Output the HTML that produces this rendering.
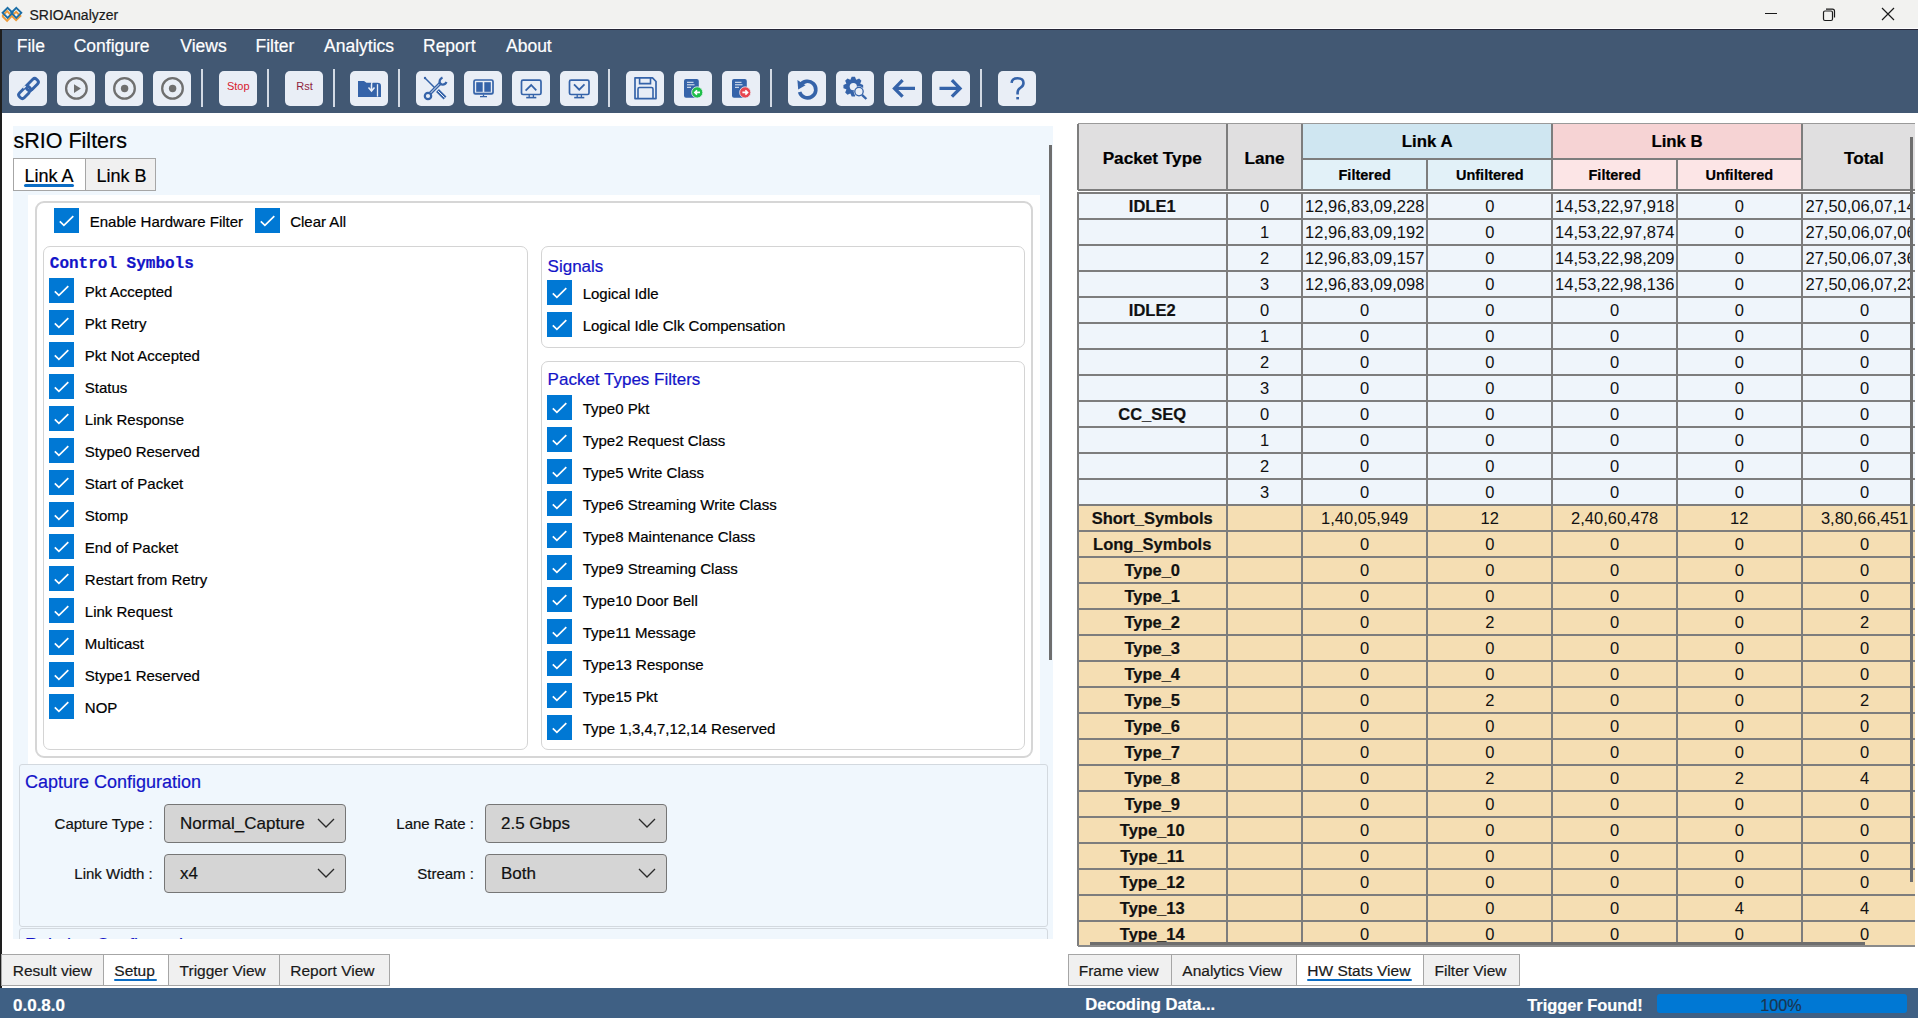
<!DOCTYPE html><html><head><meta charset="utf-8"><style>
html,body{margin:0;padding:0;width:1918px;height:1018px;overflow:hidden;background:#fff;position:relative;font-family:"Liberation Sans",sans-serif}
.t{position:absolute;line-height:1;white-space:pre;-webkit-text-stroke:0.2px currentColor}
.ns{-webkit-text-stroke:0}
.b{position:absolute;box-sizing:border-box}
.cb{position:absolute;width:25px;height:25px;background:#0078d4}
.cb svg{display:block}
.btn{position:absolute;top:71px;width:38px;height:35px;border-radius:5px;background:#e9eef6}
.btn svg{position:absolute;left:0;top:0}
.sep{position:absolute;top:69px;width:2px;height:38px;background:#d3dae4}
</style></head><body>
<div class="b" style="left:0.0px;top:0.0px;width:1918.0px;height:28.0px;background:#f2f2f0"></div>
<div class="b" style="left:0.0px;top:28.0px;width:1918.0px;height:1.0px;background:#fdfdfe"></div>
<svg style="position:absolute;left:0;top:0" width="26" height="28" viewBox="0 0 26 28">
<g fill="none" stroke-width="1.9" stroke-linejoin="miter">
<path d="M2.6 14.4 L7.4 9.6 L12 14.2 L16.4 18.6 L21.2 13.8" stroke="#ec9a3a" transform="translate(-0.3,1.6)"/>
<path d="M2.6 14.4 L7.4 19.2 L12 14.6 M12.8 13.8 L16.4 10.2 L21.2 15" stroke="#ec9a3a" transform="translate(-0.3,1.6)"/>
<path d="M7.6 7.8 L12.6 12.8 L7.6 17.8 L2.6 12.8 Z" stroke="#1b6ea6"/>
<path d="M16.3 7.8 L21.3 12.8 L16.3 17.8 L11.3 12.8 Z" stroke="#1b6ea6"/>
</g></svg>
<div class="t" style="left:29.5px;top:8.1px;font-size:14px;color:#1a1a1a;font-weight:400;font-family:'Liberation Sans', sans-serif;">SRIOAnalyzer</div>
<div class="b" style="left:1765.0px;top:13.0px;width:12.0px;height:1.0px;background:#1a1a1a"></div>
<svg style="position:absolute;left:1820px;top:6px" width="18" height="16" viewBox="0 0 18 16"><rect x="3.5" y="5" width="9" height="9.5" rx="1.5" fill="none" stroke="#1a1a1a" stroke-width="1.2"/><path d="M6 3.2 H12.5 Q14.5 3.2 14.5 5.2 V11.5" fill="none" stroke="#1a1a1a" stroke-width="1.2"/></svg>
<svg style="position:absolute;left:1880px;top:6px" width="16" height="16" viewBox="0 0 16 16"><path d="M2 2 L14 14 M14 2 L2 14" stroke="#1a1a1a" stroke-width="1.2"/></svg>
<div class="b" style="left:0.0px;top:29.0px;width:1918.0px;height:84.0px;background:#425873"></div>
<div class="b" style="left:0.0px;top:29.0px;width:1918.0px;height:1.0px;background:#262636"></div>
<div class="t" style="left:16.8px;top:38.4px;font-size:17.5px;color:#ffffff;font-weight:400;font-family:'Liberation Sans', sans-serif;">File</div>
<div class="t" style="left:73.7px;top:38.4px;font-size:17.5px;color:#ffffff;font-weight:400;font-family:'Liberation Sans', sans-serif;">Configure</div>
<div class="t" style="left:180.3px;top:38.4px;font-size:17.5px;color:#ffffff;font-weight:400;font-family:'Liberation Sans', sans-serif;">Views</div>
<div class="t" style="left:255.5px;top:38.4px;font-size:17.5px;color:#ffffff;font-weight:400;font-family:'Liberation Sans', sans-serif;">Filter</div>
<div class="t" style="left:324.0px;top:38.4px;font-size:17.5px;color:#ffffff;font-weight:400;font-family:'Liberation Sans', sans-serif;">Analytics</div>
<div class="t" style="left:423.0px;top:38.4px;font-size:17.5px;color:#ffffff;font-weight:400;font-family:'Liberation Sans', sans-serif;">Report</div>
<div class="t" style="left:506.0px;top:38.4px;font-size:17.5px;color:#ffffff;font-weight:400;font-family:'Liberation Sans', sans-serif;">About</div>
<div class="btn" style="left:9px"><svg width="38" height="35" viewBox="0 0 38 35"><g fill="none" stroke="#3563a9" stroke-width="2.9"><rect x="16.40" y="10.25" width="13.60" height="6.70" rx="2.6" transform="rotate(-45 23.2 13.6)"/><rect x="9.00" y="18.05" width="13.60" height="6.70" rx="2.6" transform="rotate(-45 15.8 21.4)"/></g><path d="M14.3 17.3 L16.6 15.0" stroke="#e9eef6" stroke-width="1.6"/><path d="M21.6 22.8 L23.9 20.5" stroke="#e9eef6" stroke-width="1.6"/></svg></div>
<div class="btn" style="left:57px"><svg width="38" height="35" viewBox="0 0 38 35"><circle cx="19.4" cy="17.4" r="10.3" fill="none" stroke="#6f6f6f" stroke-width="2.3"/><path d="M17 13.2 L23.9 17.6 L17 22 Z" fill="#6f6f6f"/></svg></div>
<div class="btn" style="left:105px"><svg width="38" height="35" viewBox="0 0 38 35"><circle cx="19.5" cy="17.4" r="10.3" fill="none" stroke="#6f6f6f" stroke-width="2.3"/><circle cx="19.6" cy="17.5" r="3.7" fill="#6f6f6f"/></svg></div>
<div class="btn" style="left:153px"><svg width="38" height="35" viewBox="0 0 38 35"><circle cx="19.5" cy="17.4" r="10.3" fill="none" stroke="#6f6f6f" stroke-width="2.3"/><circle cx="19.6" cy="17.5" r="3.7" fill="#6f6f6f"/></svg></div>
<div class="btn" style="left:219px"><svg width="38" height="35" viewBox="0 0 38 35"><text x="19.2" y="18.9" text-anchor="middle" font-family="Liberation Sans" font-size="11" fill="#d8202e">Stop</text></svg></div>
<div class="btn" style="left:285px"><svg width="38" height="35" viewBox="0 0 38 35"><text x="19.5" y="18.9" text-anchor="middle" font-family="Liberation Sans" font-size="11" fill="#8f1d3d">Rst</text></svg></div>
<div class="btn" style="left:350px"><svg width="38" height="35" viewBox="0 0 38 35"><path d="M8 10 H14 L16.5 11.8 H27.5 Q31 11.8 31 15 V26 H8 Z" fill="#3563a9"/><path d="M23.6 9 Q21.5 11 21.5 14 V19.5 M18.5 16.5 L21.5 20 L24.5 16.5" stroke="#e9eef6" stroke-width="1.5" fill="none"/><path d="M27.5 13.2 V25.6" stroke="#e9eef6" stroke-width="1.3" fill="none"/></svg></div>
<div class="btn" style="left:416px"><svg width="38" height="35" viewBox="0 0 38 35"><g fill="none" stroke="#3563a9"><path d="M9 7 L18.5 16.5" stroke-width="1.5"/><circle cx="9" cy="7" r="1.2" fill="#3563a9" stroke="none"/><path d="M21.5 19.5 L29 27" stroke-width="4"/><path d="M22 20 L28.6 26.6" stroke="#e9eef6" stroke-width="1"/><path d="M14 22.5 L25 11.5" stroke-width="3.4"/><path d="M14.3 22.2 L24.7 11.8" stroke="#e9eef6" stroke-width="1"/><circle cx="12" cy="25" r="3.2" stroke-width="2.2"/><path d="M24 13 Q22.5 8.5 26.5 6.5 M30.5 11 Q28.5 15 24 13" stroke-width="2.2"/></g></svg></div>
<div class="btn" style="left:464px"><svg width="38" height="35" viewBox="0 0 38 35"><rect x="10" y="9" width="19" height="14" rx="1.5" fill="none" stroke="#3563a9" stroke-width="1.7"/><path d="M10 22.3 H29" stroke="#3563a9" stroke-width="1.2"/><rect x="12.2" y="11.2" width="6.5" height="9.6" fill="#3563a9"/><rect x="20.3" y="11.2" width="6.5" height="9.6" fill="#3563a9"/><path d="M19.5 23.5 V25.5 M16 25.7 H23" stroke="#3563a9" stroke-width="1.3"/></svg></div>
<div class="btn" style="left:512px"><svg width="38" height="35" viewBox="0 0 38 35"><rect x="9.5" y="9.2" width="19.5" height="14.3" rx="1.5" fill="none" stroke="#3563a9" stroke-width="1.7"/><path d="M13.6 19.7 L19.2 14 L24.3 19.3" fill="none" stroke="#3563a9" stroke-width="1.8"/><path d="M17.2 23.6 V26 M21.4 23.6 V26" stroke="#3563a9" stroke-width="1.3"/><path d="M14.2 26.6 H24.3" stroke="#3563a9" stroke-width="1.6"/></svg></div>
<div class="btn" style="left:560px"><svg width="38" height="35" viewBox="0 0 38 35"><rect x="9.5" y="9.2" width="19.5" height="14.3" rx="1.5" fill="none" stroke="#3563a9" stroke-width="1.7"/><path d="M14 13.3 L19.2 18.7 L24.5 13.3" fill="none" stroke="#3563a9" stroke-width="1.8"/><path d="M17.2 23.6 V26 M21.4 23.6 V26" stroke="#3563a9" stroke-width="1.3"/><path d="M14.2 26.6 H24.3" stroke="#3563a9" stroke-width="1.6"/></svg></div>
<div class="btn" style="left:626px"><svg width="38" height="35" viewBox="0 0 38 35"><path d="M9 6.8 H26.5 L30 10.5 V27.6 H9 Z" fill="none" stroke="#3563a9" stroke-width="1.7" stroke-linejoin="round"/><path d="M13.6 6.8 V12.6 H24.5 V6.8" fill="none" stroke="#3563a9" stroke-width="1.6"/><path d="M12 27.6 V18 Q12 16.5 13.5 16.5 H25.5 Q27 16.5 27 18 V27.6" fill="none" stroke="#3563a9" stroke-width="1.6"/></svg></div>
<div class="btn" style="left:674px"><svg width="38" height="35" viewBox="0 0 38 35"><rect x="10" y="8" width="14.8" height="18.8" rx="2" fill="#3563a9"/><path d="M13 11.3 H19.5 M13 13.8 H20.5 M13 16.3 H17" stroke="#e9eef6" stroke-width="1"/><circle cx="23.2" cy="21.4" r="5.6" fill="#1fbf4a" stroke="#e9eef6" stroke-width="0.8"/><path d="M26 21.4 H20.8 M23 19.2 L20.8 21.4 L23 23.6" stroke="#fff" stroke-width="1.6" fill="none"/></svg></div>
<div class="btn" style="left:722px"><svg width="38" height="35" viewBox="0 0 38 35"><rect x="10" y="8" width="14.8" height="18.8" rx="2" fill="#3563a9"/><path d="M13 11.3 H19.5 M13 13.8 H20.5 M13 16.3 H17" stroke="#e9eef6" stroke-width="1"/><circle cx="23.2" cy="21.4" r="5.6" fill="#e8464f" stroke="#e9eef6" stroke-width="0.8"/><path d="M20.4 21.4 H25.6 M23.4 19.2 L25.6 21.4 L23.4 23.6" stroke="#fff" stroke-width="1.6" fill="none"/></svg></div>
<div class="btn" style="left:788px"><svg width="38" height="35" viewBox="0 0 38 35"><path d="M12.3 14.5 A8.3 8.3 0 1 1 11.6 21" fill="none" stroke="#3563a9" stroke-width="3.6"/><path d="M9.4 9 L10.2 18.5 L17.5 14.2 Z" fill="#3563a9"/></svg></div>
<div class="btn" style="left:836px"><svg width="38" height="35" viewBox="0 0 38 35"><path d="M24.38 12.83 L27.16 13.96 L27.16 17.24 L24.38 18.37 L24.26 18.65 L25.44 21.41 L23.11 23.74 L20.35 22.56 L20.07 22.68 L18.94 25.46 L15.66 25.46 L14.53 22.68 L14.25 22.56 L11.49 23.74 L9.16 21.41 L10.34 18.65 L10.22 18.37 L7.44 17.24 L7.44 13.96 L10.22 12.83 L10.34 12.55 L9.16 9.79 L11.49 7.46 L14.25 8.64 L14.53 8.52 L15.66 5.74 L18.94 5.74 L20.07 8.52 L20.35 8.64 L23.11 7.46 L25.44 9.79 L24.26 12.55 Z" fill="#3563a9"/><circle cx="17.3" cy="15.6" r="3.6" fill="#e9eef6"/><circle cx="23" cy="20.6" r="5.3" fill="#e9eef6"/><circle cx="23" cy="20.6" r="4.2" fill="none" stroke="#3563a9" stroke-width="1.3"/><path d="M26 23.8 L30.4 28" stroke="#3563a9" stroke-width="2.4"/></svg></div>
<div class="btn" style="left:884px"><svg width="38" height="35" viewBox="0 0 38 35"><path d="M31 17.4 H11 M18.6 9.2 L10.5 17.4 L18.6 25.6" fill="none" stroke="#3563a9" stroke-width="3.3"/></svg></div>
<div class="btn" style="left:932px"><svg width="38" height="35" viewBox="0 0 38 35"><path d="M7.5 17.4 H27.5 M19.9 9.2 L28 17.4 L19.9 25.6" fill="none" stroke="#3563a9" stroke-width="3.3"/></svg></div>
<div class="btn" style="left:998px"><svg width="38" height="35" viewBox="0 0 38 35"><path d="M13.6 11.8 Q14 7.3 19.6 7.3 Q25.5 7.3 25.5 12 Q25.5 15 22.2 17 Q19.6 18.7 19.6 21.3 V23.5" fill="none" stroke="#3563a9" stroke-width="2.6"/><rect x="18.3" y="26" width="2.7" height="2.4" fill="#3563a9"/></svg></div>
<div class="sep" style="left:201px"></div>
<div class="sep" style="left:267px"></div>
<div class="sep" style="left:333px"></div>
<div class="sep" style="left:398px"></div>
<div class="sep" style="left:608px"></div>
<div class="sep" style="left:770px"></div>
<div class="sep" style="left:980px"></div>
<div class="b" style="left:0.0px;top:29.0px;width:1.5px;height:959.0px;background:#1e1e1e"></div>
<div class="b" style="left:13.0px;top:126.0px;width:1040.0px;height:813.0px;background:#f0f7fd"></div>
<div class="t" style="left:13.5px;top:130.8px;font-size:21.5px;color:#000;font-weight:400;font-family:'Liberation Sans', sans-serif;">sRIO Filters</div>
<div class="b" style="left:13.0px;top:158.0px;width:72.5px;height:33.0px;background:#fff;border:1px solid #a6a6a6;border-right:none"></div>
<div class="b" style="left:85.0px;top:158.0px;width:71.0px;height:33.0px;background:#f0f0f0;border:1px solid #a6a6a6"></div>
<div class="t" style="left:24.4px;top:166.8px;font-size:18px;color:#000;font-weight:400;font-family:'Liberation Sans', sans-serif;">Link A</div>
<div class="b" style="left:24.0px;top:184.0px;width:50.0px;height:3.0px;background:#0a6cc4;border-radius:2px"></div>
<div class="t" style="left:96.5px;top:166.8px;font-size:18px;color:#000;font-weight:400;font-family:'Liberation Sans', sans-serif;">Link B</div>
<div class="b" style="left:27.5px;top:195.0px;width:1012.5px;height:569.0px;background:#fff"></div>
<div class="b" style="left:34.5px;top:201.3px;width:998.0px;height:556.7px;background:#fff;border:2px solid #d6d6d6;border-radius:9px"></div>
<div class="cb" style="left:54px;top:208px"><svg width="25" height="25" viewBox="0 0 25 25"><path d="M5.8 13.4 L9.9 17.4 L19.3 8.2" fill="none" stroke="#fff" stroke-width="1.7"/></svg></div>
<div class="t" style="left:89.7px;top:214.3px;font-size:15px;color:#000;font-weight:400;font-family:'Liberation Sans', sans-serif;">Enable Hardware Filter</div>
<div class="cb" style="left:255px;top:208px"><svg width="25" height="25" viewBox="0 0 25 25"><path d="M5.8 13.4 L9.9 17.4 L19.3 8.2" fill="none" stroke="#fff" stroke-width="1.7"/></svg></div>
<div class="t" style="left:290.2px;top:214.3px;font-size:15px;color:#000;font-weight:400;font-family:'Liberation Sans', sans-serif;">Clear All</div>
<div class="b" style="left:42.5px;top:246.0px;width:485.0px;height:504.3px;background:#fff;border:1.5px solid #d4d4d4;border-radius:7px"></div>
<div class="t" style="left:49.8px;top:256.4px;font-size:16px;color:#1414c8;font-weight:700;font-family:'Liberation Mono', monospace;">Control Symbols</div>
<div class="cb" style="left:49px;top:278px"><svg width="25" height="25" viewBox="0 0 25 25"><path d="M5.8 13.4 L9.9 17.4 L19.3 8.2" fill="none" stroke="#fff" stroke-width="1.7"/></svg></div>
<div class="t" style="left:84.8px;top:284.3px;font-size:15px;color:#000;font-weight:400;font-family:'Liberation Sans', sans-serif;">Pkt Accepted</div>
<div class="cb" style="left:49px;top:310px"><svg width="25" height="25" viewBox="0 0 25 25"><path d="M5.8 13.4 L9.9 17.4 L19.3 8.2" fill="none" stroke="#fff" stroke-width="1.7"/></svg></div>
<div class="t" style="left:84.8px;top:316.3px;font-size:15px;color:#000;font-weight:400;font-family:'Liberation Sans', sans-serif;">Pkt Retry</div>
<div class="cb" style="left:49px;top:342px"><svg width="25" height="25" viewBox="0 0 25 25"><path d="M5.8 13.4 L9.9 17.4 L19.3 8.2" fill="none" stroke="#fff" stroke-width="1.7"/></svg></div>
<div class="t" style="left:84.8px;top:348.3px;font-size:15px;color:#000;font-weight:400;font-family:'Liberation Sans', sans-serif;">Pkt Not Accepted</div>
<div class="cb" style="left:49px;top:374px"><svg width="25" height="25" viewBox="0 0 25 25"><path d="M5.8 13.4 L9.9 17.4 L19.3 8.2" fill="none" stroke="#fff" stroke-width="1.7"/></svg></div>
<div class="t" style="left:84.8px;top:380.3px;font-size:15px;color:#000;font-weight:400;font-family:'Liberation Sans', sans-serif;">Status</div>
<div class="cb" style="left:49px;top:406px"><svg width="25" height="25" viewBox="0 0 25 25"><path d="M5.8 13.4 L9.9 17.4 L19.3 8.2" fill="none" stroke="#fff" stroke-width="1.7"/></svg></div>
<div class="t" style="left:84.8px;top:412.3px;font-size:15px;color:#000;font-weight:400;font-family:'Liberation Sans', sans-serif;">Link Response</div>
<div class="cb" style="left:49px;top:438px"><svg width="25" height="25" viewBox="0 0 25 25"><path d="M5.8 13.4 L9.9 17.4 L19.3 8.2" fill="none" stroke="#fff" stroke-width="1.7"/></svg></div>
<div class="t" style="left:84.8px;top:444.3px;font-size:15px;color:#000;font-weight:400;font-family:'Liberation Sans', sans-serif;">Stype0 Reserved</div>
<div class="cb" style="left:49px;top:470px"><svg width="25" height="25" viewBox="0 0 25 25"><path d="M5.8 13.4 L9.9 17.4 L19.3 8.2" fill="none" stroke="#fff" stroke-width="1.7"/></svg></div>
<div class="t" style="left:84.8px;top:476.3px;font-size:15px;color:#000;font-weight:400;font-family:'Liberation Sans', sans-serif;">Start of Packet</div>
<div class="cb" style="left:49px;top:502px"><svg width="25" height="25" viewBox="0 0 25 25"><path d="M5.8 13.4 L9.9 17.4 L19.3 8.2" fill="none" stroke="#fff" stroke-width="1.7"/></svg></div>
<div class="t" style="left:84.8px;top:508.3px;font-size:15px;color:#000;font-weight:400;font-family:'Liberation Sans', sans-serif;">Stomp</div>
<div class="cb" style="left:49px;top:534px"><svg width="25" height="25" viewBox="0 0 25 25"><path d="M5.8 13.4 L9.9 17.4 L19.3 8.2" fill="none" stroke="#fff" stroke-width="1.7"/></svg></div>
<div class="t" style="left:84.8px;top:540.3px;font-size:15px;color:#000;font-weight:400;font-family:'Liberation Sans', sans-serif;">End of Packet</div>
<div class="cb" style="left:49px;top:566px"><svg width="25" height="25" viewBox="0 0 25 25"><path d="M5.8 13.4 L9.9 17.4 L19.3 8.2" fill="none" stroke="#fff" stroke-width="1.7"/></svg></div>
<div class="t" style="left:84.8px;top:572.3px;font-size:15px;color:#000;font-weight:400;font-family:'Liberation Sans', sans-serif;">Restart from Retry</div>
<div class="cb" style="left:49px;top:598px"><svg width="25" height="25" viewBox="0 0 25 25"><path d="M5.8 13.4 L9.9 17.4 L19.3 8.2" fill="none" stroke="#fff" stroke-width="1.7"/></svg></div>
<div class="t" style="left:84.8px;top:604.3px;font-size:15px;color:#000;font-weight:400;font-family:'Liberation Sans', sans-serif;">Link Request</div>
<div class="cb" style="left:49px;top:630px"><svg width="25" height="25" viewBox="0 0 25 25"><path d="M5.8 13.4 L9.9 17.4 L19.3 8.2" fill="none" stroke="#fff" stroke-width="1.7"/></svg></div>
<div class="t" style="left:84.8px;top:636.3px;font-size:15px;color:#000;font-weight:400;font-family:'Liberation Sans', sans-serif;">Multicast</div>
<div class="cb" style="left:49px;top:662px"><svg width="25" height="25" viewBox="0 0 25 25"><path d="M5.8 13.4 L9.9 17.4 L19.3 8.2" fill="none" stroke="#fff" stroke-width="1.7"/></svg></div>
<div class="t" style="left:84.8px;top:668.3px;font-size:15px;color:#000;font-weight:400;font-family:'Liberation Sans', sans-serif;">Stype1 Reserved</div>
<div class="cb" style="left:49px;top:694px"><svg width="25" height="25" viewBox="0 0 25 25"><path d="M5.8 13.4 L9.9 17.4 L19.3 8.2" fill="none" stroke="#fff" stroke-width="1.7"/></svg></div>
<div class="t" style="left:84.8px;top:700.3px;font-size:15px;color:#000;font-weight:400;font-family:'Liberation Sans', sans-serif;">NOP</div>
<div class="b" style="left:541.0px;top:246.0px;width:484.0px;height:101.5px;background:#fff;border:1.5px solid #d4d4d4;border-radius:7px"></div>
<div class="t" style="left:547.6px;top:257.9px;font-size:17px;color:#1414c8;font-weight:400;font-family:'Liberation Sans', sans-serif;">Signals</div>
<div class="cb" style="left:547px;top:280px"><svg width="25" height="25" viewBox="0 0 25 25"><path d="M5.8 13.4 L9.9 17.4 L19.3 8.2" fill="none" stroke="#fff" stroke-width="1.7"/></svg></div>
<div class="t" style="left:582.7px;top:286.3px;font-size:15px;color:#000;font-weight:400;font-family:'Liberation Sans', sans-serif;">Logical Idle</div>
<div class="cb" style="left:547px;top:312px"><svg width="25" height="25" viewBox="0 0 25 25"><path d="M5.8 13.4 L9.9 17.4 L19.3 8.2" fill="none" stroke="#fff" stroke-width="1.7"/></svg></div>
<div class="t" style="left:582.7px;top:318.3px;font-size:15px;color:#000;font-weight:400;font-family:'Liberation Sans', sans-serif;">Logical Idle Clk Compensation</div>
<div class="b" style="left:541.0px;top:360.5px;width:484.0px;height:389.8px;background:#fff;border:1.5px solid #d4d4d4;border-radius:7px"></div>
<div class="t" style="left:547.6px;top:371.4px;font-size:17px;color:#1414c8;font-weight:400;font-family:'Liberation Sans', sans-serif;">Packet Types Filters</div>
<div class="cb" style="left:547px;top:395px"><svg width="25" height="25" viewBox="0 0 25 25"><path d="M5.8 13.4 L9.9 17.4 L19.3 8.2" fill="none" stroke="#fff" stroke-width="1.7"/></svg></div>
<div class="t" style="left:582.7px;top:400.5px;font-size:15px;color:#000;font-weight:400;font-family:'Liberation Sans', sans-serif;">Type0 Pkt</div>
<div class="cb" style="left:547px;top:427px"><svg width="25" height="25" viewBox="0 0 25 25"><path d="M5.8 13.4 L9.9 17.4 L19.3 8.2" fill="none" stroke="#fff" stroke-width="1.7"/></svg></div>
<div class="t" style="left:582.7px;top:432.5px;font-size:15px;color:#000;font-weight:400;font-family:'Liberation Sans', sans-serif;">Type2 Request Class</div>
<div class="cb" style="left:547px;top:459px"><svg width="25" height="25" viewBox="0 0 25 25"><path d="M5.8 13.4 L9.9 17.4 L19.3 8.2" fill="none" stroke="#fff" stroke-width="1.7"/></svg></div>
<div class="t" style="left:582.7px;top:464.5px;font-size:15px;color:#000;font-weight:400;font-family:'Liberation Sans', sans-serif;">Type5 Write Class</div>
<div class="cb" style="left:547px;top:491px"><svg width="25" height="25" viewBox="0 0 25 25"><path d="M5.8 13.4 L9.9 17.4 L19.3 8.2" fill="none" stroke="#fff" stroke-width="1.7"/></svg></div>
<div class="t" style="left:582.7px;top:496.5px;font-size:15px;color:#000;font-weight:400;font-family:'Liberation Sans', sans-serif;">Type6 Streaming Write Class</div>
<div class="cb" style="left:547px;top:523px"><svg width="25" height="25" viewBox="0 0 25 25"><path d="M5.8 13.4 L9.9 17.4 L19.3 8.2" fill="none" stroke="#fff" stroke-width="1.7"/></svg></div>
<div class="t" style="left:582.7px;top:528.5px;font-size:15px;color:#000;font-weight:400;font-family:'Liberation Sans', sans-serif;">Type8 Maintenance Class</div>
<div class="cb" style="left:547px;top:555px"><svg width="25" height="25" viewBox="0 0 25 25"><path d="M5.8 13.4 L9.9 17.4 L19.3 8.2" fill="none" stroke="#fff" stroke-width="1.7"/></svg></div>
<div class="t" style="left:582.7px;top:560.5px;font-size:15px;color:#000;font-weight:400;font-family:'Liberation Sans', sans-serif;">Type9 Streaming Class</div>
<div class="cb" style="left:547px;top:587px"><svg width="25" height="25" viewBox="0 0 25 25"><path d="M5.8 13.4 L9.9 17.4 L19.3 8.2" fill="none" stroke="#fff" stroke-width="1.7"/></svg></div>
<div class="t" style="left:582.7px;top:592.5px;font-size:15px;color:#000;font-weight:400;font-family:'Liberation Sans', sans-serif;">Type10 Door Bell</div>
<div class="cb" style="left:547px;top:619px"><svg width="25" height="25" viewBox="0 0 25 25"><path d="M5.8 13.4 L9.9 17.4 L19.3 8.2" fill="none" stroke="#fff" stroke-width="1.7"/></svg></div>
<div class="t" style="left:582.7px;top:624.5px;font-size:15px;color:#000;font-weight:400;font-family:'Liberation Sans', sans-serif;">Type11 Message</div>
<div class="cb" style="left:547px;top:651px"><svg width="25" height="25" viewBox="0 0 25 25"><path d="M5.8 13.4 L9.9 17.4 L19.3 8.2" fill="none" stroke="#fff" stroke-width="1.7"/></svg></div>
<div class="t" style="left:582.7px;top:656.5px;font-size:15px;color:#000;font-weight:400;font-family:'Liberation Sans', sans-serif;">Type13 Response</div>
<div class="cb" style="left:547px;top:683px"><svg width="25" height="25" viewBox="0 0 25 25"><path d="M5.8 13.4 L9.9 17.4 L19.3 8.2" fill="none" stroke="#fff" stroke-width="1.7"/></svg></div>
<div class="t" style="left:582.7px;top:688.5px;font-size:15px;color:#000;font-weight:400;font-family:'Liberation Sans', sans-serif;">Type15 Pkt</div>
<div class="cb" style="left:547px;top:715px"><svg width="25" height="25" viewBox="0 0 25 25"><path d="M5.8 13.4 L9.9 17.4 L19.3 8.2" fill="none" stroke="#fff" stroke-width="1.7"/></svg></div>
<div class="t" style="left:582.7px;top:720.5px;font-size:15px;color:#000;font-weight:400;font-family:'Liberation Sans', sans-serif;">Type 1,3,4,7,12,14 Reserved</div>
<div class="b" style="left:1049.0px;top:145.0px;width:3.0px;height:515.0px;background:#6e6e6e"></div>
<div class="b" style="left:19.0px;top:764.0px;width:1028.5px;height:163.0px;background:#f0f7fd;border:1px solid #d3d9df;border-radius:3px"></div>
<div class="t" style="left:25.0px;top:773.1px;font-size:18px;color:#1414c8;font-weight:400;font-family:'Liberation Sans', sans-serif;">Capture Configuration</div>
<div class="b" style="left:164.0px;top:803.5px;width:182.0px;height:39.0px;background:#d5d5d5;border:1px solid #767676;border-radius:4px"></div>
<div class="t" style="left:180.0px;top:814.9px;font-size:17px;color:#111;font-weight:400;font-family:'Liberation Sans', sans-serif;">Normal_Capture</div>
<div style="position:absolute;left:317px;top:817.5px;line-height:0"><svg style="display:block" width="18" height="10" viewBox="0 0 18 10"><path d="M1 1 L9 9 L17 1" fill="none" stroke="#2a2a2a" stroke-width="1.3"/></svg></div>
<div class="b" style="left:164.0px;top:853.5px;width:182.0px;height:39.5px;background:#d5d5d5;border:1px solid #767676;border-radius:4px"></div>
<div class="t" style="left:180.0px;top:864.9px;font-size:17px;color:#111;font-weight:400;font-family:'Liberation Sans', sans-serif;">x4</div>
<div style="position:absolute;left:317px;top:867.5px;line-height:0"><svg style="display:block" width="18" height="10" viewBox="0 0 18 10"><path d="M1 1 L9 9 L17 1" fill="none" stroke="#2a2a2a" stroke-width="1.3"/></svg></div>
<div class="b" style="left:485.0px;top:803.5px;width:182.0px;height:39.0px;background:#d5d5d5;border:1px solid #767676;border-radius:4px"></div>
<div class="t" style="left:501.0px;top:814.9px;font-size:17px;color:#111;font-weight:400;font-family:'Liberation Sans', sans-serif;">2.5 Gbps</div>
<div style="position:absolute;left:638px;top:817.5px;line-height:0"><svg style="display:block" width="18" height="10" viewBox="0 0 18 10"><path d="M1 1 L9 9 L17 1" fill="none" stroke="#2a2a2a" stroke-width="1.3"/></svg></div>
<div class="b" style="left:485.0px;top:853.5px;width:182.0px;height:39.5px;background:#d5d5d5;border:1px solid #767676;border-radius:4px"></div>
<div class="t" style="left:501.0px;top:864.9px;font-size:17px;color:#111;font-weight:400;font-family:'Liberation Sans', sans-serif;">Both</div>
<div style="position:absolute;left:638px;top:867.5px;line-height:0"><svg style="display:block" width="18" height="10" viewBox="0 0 18 10"><path d="M1 1 L9 9 L17 1" fill="none" stroke="#2a2a2a" stroke-width="1.3"/></svg></div>
<div class="t" style="right:1765.3px;top:815.8px;font-size:15px;color:#111">Capture Type :</div>
<div class="t" style="right:1765.3px;top:865.8px;font-size:15px;color:#111">Link Width :</div>
<div class="t" style="right:1444.1px;top:815.8px;font-size:15px;color:#111">Lane Rate :</div>
<div class="t" style="right:1444.1px;top:865.8px;font-size:15px;color:#111">Stream :</div>
<div style="position:absolute;left:19px;top:928px;width:1029px;height:11px;overflow:hidden"><div class="b" style="left:0;top:0;width:1029px;height:40px;border:1px solid #d3d9df;border-radius:3px;background:#f0f7fd"></div><div class="t" style="left:6px;top:8px;font-size:18px;color:#1414c8">Relation Configuration</div></div>
<div class="b" style="left:1.0px;top:953.5px;width:102.5px;height:32.0px;background:#f0f0f0;border:1px solid #a6a6a6"></div>
<div class="t" style="left:12.7px;top:963.2px;font-size:15.5px;color:#1a1a1a;font-weight:400;font-family:'Liberation Sans', sans-serif;">Result view</div>
<div class="b" style="left:102.5px;top:953.5px;width:66.5px;height:32.0px;background:#ffffff;border:1px solid #a6a6a6"></div>
<div class="t" style="left:114.3px;top:963.2px;font-size:15.5px;color:#1a1a1a;font-weight:400;font-family:'Liberation Sans', sans-serif;">Setup</div>
<div class="b" style="left:168.0px;top:953.5px;width:111.7px;height:32.0px;background:#f0f0f0;border:1px solid #a6a6a6"></div>
<div class="t" style="left:179.6px;top:963.2px;font-size:15.5px;color:#1a1a1a;font-weight:400;font-family:'Liberation Sans', sans-serif;">Trigger View</div>
<div class="b" style="left:278.7px;top:953.5px;width:111.0px;height:32.0px;background:#f0f0f0;border:1px solid #a6a6a6"></div>
<div class="t" style="left:290.3px;top:963.2px;font-size:15.5px;color:#1a1a1a;font-weight:400;font-family:'Liberation Sans', sans-serif;">Report View</div>
<div class="b" style="left:114.0px;top:978.5px;width:43.0px;height:2.5px;background:#0a6cc4;border-radius:2px"></div>
<div class="b" style="left:1067.5px;top:953.5px;width:104.2px;height:32.0px;background:#f0f0f0;border:1px solid #a6a6a6"></div>
<div class="t" style="left:1078.7px;top:963.2px;font-size:15.5px;color:#1a1a1a;font-weight:400;font-family:'Liberation Sans', sans-serif;">Frame view</div>
<div class="b" style="left:1170.7px;top:953.5px;width:126.1px;height:32.0px;background:#f0f0f0;border:1px solid #a6a6a6"></div>
<div class="t" style="left:1182.3px;top:963.2px;font-size:15.5px;color:#1a1a1a;font-weight:400;font-family:'Liberation Sans', sans-serif;">Analytics View</div>
<div class="b" style="left:1295.8px;top:953.5px;width:128.0px;height:32.0px;background:#ffffff;border:1px solid #a6a6a6"></div>
<div class="t" style="left:1307.3px;top:963.2px;font-size:15.5px;color:#1a1a1a;font-weight:400;font-family:'Liberation Sans', sans-serif;">HW Stats View</div>
<div class="b" style="left:1422.8px;top:953.5px;width:97.4px;height:32.0px;background:#f0f0f0;border:1px solid #a6a6a6"></div>
<div class="t" style="left:1434.5px;top:963.2px;font-size:15.5px;color:#1a1a1a;font-weight:400;font-family:'Liberation Sans', sans-serif;">Filter View</div>
<div class="b" style="left:1307.0px;top:978.5px;width:105.0px;height:2.5px;background:#0a6cc4;border-radius:2px"></div>
<div class="b" style="left:1077.5px;top:123.5px;width:224.5px;height:66.5px;background:#e0dfe0"></div>
<div class="b" style="left:1801.7px;top:123.5px;width:113.3px;height:66.5px;background:#e0dfe0"></div>
<div class="b" style="left:1302.0px;top:123.5px;width:250.4px;height:35.5px;background:#cfe6f1"></div>
<div class="b" style="left:1302.0px;top:159.0px;width:250.4px;height:31.0px;background:#e2f1f8"></div>
<div class="b" style="left:1552.4px;top:123.5px;width:249.3px;height:35.5px;background:#f6d3d4"></div>
<div class="b" style="left:1552.4px;top:159.0px;width:249.3px;height:31.0px;background:#fce5e6"></div>
<div class="b" style="left:1077.5px;top:122.8px;width:837.5px;height:1.5px;background:#9a9a9a"></div>
<div class="b" style="left:1302.0px;top:158.0px;width:499.7px;height:2.0px;background:#7d7d7d"></div>
<div class="b" style="left:1077.5px;top:188.5px;width:837.5px;height:2.0px;background:#7d7d7d"></div>
<div class="b" style="left:1076.5px;top:123.5px;width:2.0px;height:66.5px;background:#7d7d7d"></div>
<div class="b" style="left:1226.0px;top:123.5px;width:2.0px;height:66.5px;background:#7d7d7d"></div>
<div class="b" style="left:1301.0px;top:123.5px;width:2.0px;height:66.5px;background:#7d7d7d"></div>
<div class="b" style="left:1551.4px;top:123.5px;width:2.0px;height:66.5px;background:#7d7d7d"></div>
<div class="b" style="left:1800.7px;top:123.5px;width:2.0px;height:66.5px;background:#7d7d7d"></div>
<div class="b" style="left:1426.3px;top:159.0px;width:2.0px;height:31.0px;background:#7d7d7d"></div>
<div class="b" style="left:1676.0px;top:159.0px;width:2.0px;height:31.0px;background:#7d7d7d"></div>
<div class="t" style="left:952.2px;width:400px;text-align:center;top:149.6px;font-size:17.2px;font-weight:700;color:#000">Packet Type</div>
<div class="t" style="left:1064.5px;width:400px;text-align:center;top:149.6px;font-size:17.2px;font-weight:700;color:#000">Lane</div>
<div class="t" style="left:1227.2px;width:400px;text-align:center;top:133.5px;font-size:16.8px;font-weight:700;color:#000">Link A</div>
<div class="t" style="left:1477.1px;width:400px;text-align:center;top:133.5px;font-size:16.8px;font-weight:700;color:#000">Link B</div>
<div class="t" style="left:1664.0px;width:400px;text-align:center;top:149.6px;font-size:17.2px;font-weight:700;color:#000">Total</div>
<div class="t" style="left:1164.7px;width:400px;text-align:center;top:168.1px;font-size:14.5px;font-weight:700;color:#000">Filtered</div>
<div class="t" style="left:1289.8px;width:400px;text-align:center;top:168.1px;font-size:14.5px;font-weight:700;color:#000">Unfiltered</div>
<div class="t" style="left:1414.7px;width:400px;text-align:center;top:168.1px;font-size:14.5px;font-weight:700;color:#000">Filtered</div>
<div class="t" style="left:1539.3px;width:400px;text-align:center;top:168.1px;font-size:14.5px;font-weight:700;color:#000">Unfiltered</div>
<div style="position:absolute;left:1076px;top:191px;width:839px;height:755px;overflow:hidden">
<div class="b" style="left:1.5px;top:2.3px;width:837.5px;height:26.0px;background:#eff5fb"></div>
<div class="b" style="left:1.5px;top:28.3px;width:837.5px;height:26.0px;background:#eff5fb"></div>
<div class="b" style="left:1.5px;top:54.3px;width:837.5px;height:26.0px;background:#eff5fb"></div>
<div class="b" style="left:1.5px;top:80.3px;width:837.5px;height:26.0px;background:#eff5fb"></div>
<div class="b" style="left:1.5px;top:106.3px;width:837.5px;height:26.0px;background:#eff5fb"></div>
<div class="b" style="left:1.5px;top:132.3px;width:837.5px;height:26.0px;background:#eff5fb"></div>
<div class="b" style="left:1.5px;top:158.3px;width:837.5px;height:26.0px;background:#eff5fb"></div>
<div class="b" style="left:1.5px;top:184.3px;width:837.5px;height:26.0px;background:#eff5fb"></div>
<div class="b" style="left:1.5px;top:210.3px;width:837.5px;height:26.0px;background:#eff5fb"></div>
<div class="b" style="left:1.5px;top:236.3px;width:837.5px;height:26.0px;background:#eff5fb"></div>
<div class="b" style="left:1.5px;top:262.3px;width:837.5px;height:26.0px;background:#eff5fb"></div>
<div class="b" style="left:1.5px;top:288.3px;width:837.5px;height:26.0px;background:#eff5fb"></div>
<div class="b" style="left:1.5px;top:314.3px;width:837.5px;height:26.0px;background:#f5deb3"></div>
<div class="b" style="left:1.5px;top:340.3px;width:837.5px;height:26.0px;background:#f5deb3"></div>
<div class="b" style="left:1.5px;top:366.3px;width:837.5px;height:26.0px;background:#f5deb3"></div>
<div class="b" style="left:1.5px;top:392.3px;width:837.5px;height:26.0px;background:#f5deb3"></div>
<div class="b" style="left:1.5px;top:418.3px;width:837.5px;height:26.0px;background:#f5deb3"></div>
<div class="b" style="left:1.5px;top:444.3px;width:837.5px;height:26.0px;background:#f5deb3"></div>
<div class="b" style="left:1.5px;top:470.3px;width:837.5px;height:26.0px;background:#f5deb3"></div>
<div class="b" style="left:1.5px;top:496.3px;width:837.5px;height:26.0px;background:#f5deb3"></div>
<div class="b" style="left:1.5px;top:522.3px;width:837.5px;height:26.0px;background:#f5deb3"></div>
<div class="b" style="left:1.5px;top:548.3px;width:837.5px;height:26.0px;background:#f5deb3"></div>
<div class="b" style="left:1.5px;top:574.3px;width:837.5px;height:26.0px;background:#f5deb3"></div>
<div class="b" style="left:1.5px;top:600.3px;width:837.5px;height:26.0px;background:#f5deb3"></div>
<div class="b" style="left:1.5px;top:626.3px;width:837.5px;height:26.0px;background:#f5deb3"></div>
<div class="b" style="left:1.5px;top:652.3px;width:837.5px;height:26.0px;background:#f5deb3"></div>
<div class="b" style="left:1.5px;top:678.3px;width:837.5px;height:26.0px;background:#f5deb3"></div>
<div class="b" style="left:1.5px;top:704.3px;width:837.5px;height:26.0px;background:#f5deb3"></div>
<div class="b" style="left:1.5px;top:730.3px;width:837.5px;height:26.0px;background:#f5deb3"></div>
<div class="t" style="left:-123.8px;width:400px;text-align:center;top:7.0px;font-size:16.5px;font-weight:700;color:#111">IDLE1</div>
<div class="t ns" style="left:-11.5px;width:400px;text-align:center;top:7.0px;font-size:16.5px;font-weight:400;color:#111">0</div>
<div class="t ns" style="left:88.7px;width:400px;text-align:center;top:7.0px;font-size:16.5px;font-weight:400;color:#111">12,96,83,09,228</div>
<div class="t ns" style="left:213.8px;width:400px;text-align:center;top:7.0px;font-size:16.5px;font-weight:400;color:#111">0</div>
<div class="t ns" style="left:338.7px;width:400px;text-align:center;top:7.0px;font-size:16.5px;font-weight:400;color:#111">14,53,22,97,918</div>
<div class="t ns" style="left:463.3px;width:400px;text-align:center;top:7.0px;font-size:16.5px;font-weight:400;color:#111">0</div>
<div class="t" style="left:-123.8px;width:400px;text-align:center;top:33.0px;font-size:16.5px;font-weight:700;color:#111"></div>
<div class="t ns" style="left:-11.5px;width:400px;text-align:center;top:33.0px;font-size:16.5px;font-weight:400;color:#111">1</div>
<div class="t ns" style="left:88.7px;width:400px;text-align:center;top:33.0px;font-size:16.5px;font-weight:400;color:#111">12,96,83,09,192</div>
<div class="t ns" style="left:213.8px;width:400px;text-align:center;top:33.0px;font-size:16.5px;font-weight:400;color:#111">0</div>
<div class="t ns" style="left:338.7px;width:400px;text-align:center;top:33.0px;font-size:16.5px;font-weight:400;color:#111">14,53,22,97,874</div>
<div class="t ns" style="left:463.3px;width:400px;text-align:center;top:33.0px;font-size:16.5px;font-weight:400;color:#111">0</div>
<div class="t" style="left:-123.8px;width:400px;text-align:center;top:59.0px;font-size:16.5px;font-weight:700;color:#111"></div>
<div class="t ns" style="left:-11.5px;width:400px;text-align:center;top:59.0px;font-size:16.5px;font-weight:400;color:#111">2</div>
<div class="t ns" style="left:88.7px;width:400px;text-align:center;top:59.0px;font-size:16.5px;font-weight:400;color:#111">12,96,83,09,157</div>
<div class="t ns" style="left:213.8px;width:400px;text-align:center;top:59.0px;font-size:16.5px;font-weight:400;color:#111">0</div>
<div class="t ns" style="left:338.7px;width:400px;text-align:center;top:59.0px;font-size:16.5px;font-weight:400;color:#111">14,53,22,98,209</div>
<div class="t ns" style="left:463.3px;width:400px;text-align:center;top:59.0px;font-size:16.5px;font-weight:400;color:#111">0</div>
<div class="t" style="left:-123.8px;width:400px;text-align:center;top:85.0px;font-size:16.5px;font-weight:700;color:#111"></div>
<div class="t ns" style="left:-11.5px;width:400px;text-align:center;top:85.0px;font-size:16.5px;font-weight:400;color:#111">3</div>
<div class="t ns" style="left:88.7px;width:400px;text-align:center;top:85.0px;font-size:16.5px;font-weight:400;color:#111">12,96,83,09,098</div>
<div class="t ns" style="left:213.8px;width:400px;text-align:center;top:85.0px;font-size:16.5px;font-weight:400;color:#111">0</div>
<div class="t ns" style="left:338.7px;width:400px;text-align:center;top:85.0px;font-size:16.5px;font-weight:400;color:#111">14,53,22,98,136</div>
<div class="t ns" style="left:463.3px;width:400px;text-align:center;top:85.0px;font-size:16.5px;font-weight:400;color:#111">0</div>
<div class="t" style="left:-123.8px;width:400px;text-align:center;top:111.0px;font-size:16.5px;font-weight:700;color:#111">IDLE2</div>
<div class="t ns" style="left:-11.5px;width:400px;text-align:center;top:111.0px;font-size:16.5px;font-weight:400;color:#111">0</div>
<div class="t ns" style="left:88.7px;width:400px;text-align:center;top:111.0px;font-size:16.5px;font-weight:400;color:#111">0</div>
<div class="t ns" style="left:213.8px;width:400px;text-align:center;top:111.0px;font-size:16.5px;font-weight:400;color:#111">0</div>
<div class="t ns" style="left:338.7px;width:400px;text-align:center;top:111.0px;font-size:16.5px;font-weight:400;color:#111">0</div>
<div class="t ns" style="left:463.3px;width:400px;text-align:center;top:111.0px;font-size:16.5px;font-weight:400;color:#111">0</div>
<div class="t" style="left:-123.8px;width:400px;text-align:center;top:137.0px;font-size:16.5px;font-weight:700;color:#111"></div>
<div class="t ns" style="left:-11.5px;width:400px;text-align:center;top:137.0px;font-size:16.5px;font-weight:400;color:#111">1</div>
<div class="t ns" style="left:88.7px;width:400px;text-align:center;top:137.0px;font-size:16.5px;font-weight:400;color:#111">0</div>
<div class="t ns" style="left:213.8px;width:400px;text-align:center;top:137.0px;font-size:16.5px;font-weight:400;color:#111">0</div>
<div class="t ns" style="left:338.7px;width:400px;text-align:center;top:137.0px;font-size:16.5px;font-weight:400;color:#111">0</div>
<div class="t ns" style="left:463.3px;width:400px;text-align:center;top:137.0px;font-size:16.5px;font-weight:400;color:#111">0</div>
<div class="t" style="left:-123.8px;width:400px;text-align:center;top:163.0px;font-size:16.5px;font-weight:700;color:#111"></div>
<div class="t ns" style="left:-11.5px;width:400px;text-align:center;top:163.0px;font-size:16.5px;font-weight:400;color:#111">2</div>
<div class="t ns" style="left:88.7px;width:400px;text-align:center;top:163.0px;font-size:16.5px;font-weight:400;color:#111">0</div>
<div class="t ns" style="left:213.8px;width:400px;text-align:center;top:163.0px;font-size:16.5px;font-weight:400;color:#111">0</div>
<div class="t ns" style="left:338.7px;width:400px;text-align:center;top:163.0px;font-size:16.5px;font-weight:400;color:#111">0</div>
<div class="t ns" style="left:463.3px;width:400px;text-align:center;top:163.0px;font-size:16.5px;font-weight:400;color:#111">0</div>
<div class="t" style="left:-123.8px;width:400px;text-align:center;top:189.0px;font-size:16.5px;font-weight:700;color:#111"></div>
<div class="t ns" style="left:-11.5px;width:400px;text-align:center;top:189.0px;font-size:16.5px;font-weight:400;color:#111">3</div>
<div class="t ns" style="left:88.7px;width:400px;text-align:center;top:189.0px;font-size:16.5px;font-weight:400;color:#111">0</div>
<div class="t ns" style="left:213.8px;width:400px;text-align:center;top:189.0px;font-size:16.5px;font-weight:400;color:#111">0</div>
<div class="t ns" style="left:338.7px;width:400px;text-align:center;top:189.0px;font-size:16.5px;font-weight:400;color:#111">0</div>
<div class="t ns" style="left:463.3px;width:400px;text-align:center;top:189.0px;font-size:16.5px;font-weight:400;color:#111">0</div>
<div class="t" style="left:-123.8px;width:400px;text-align:center;top:215.0px;font-size:16.5px;font-weight:700;color:#111">CC_SEQ</div>
<div class="t ns" style="left:-11.5px;width:400px;text-align:center;top:215.0px;font-size:16.5px;font-weight:400;color:#111">0</div>
<div class="t ns" style="left:88.7px;width:400px;text-align:center;top:215.0px;font-size:16.5px;font-weight:400;color:#111">0</div>
<div class="t ns" style="left:213.8px;width:400px;text-align:center;top:215.0px;font-size:16.5px;font-weight:400;color:#111">0</div>
<div class="t ns" style="left:338.7px;width:400px;text-align:center;top:215.0px;font-size:16.5px;font-weight:400;color:#111">0</div>
<div class="t ns" style="left:463.3px;width:400px;text-align:center;top:215.0px;font-size:16.5px;font-weight:400;color:#111">0</div>
<div class="t" style="left:-123.8px;width:400px;text-align:center;top:241.0px;font-size:16.5px;font-weight:700;color:#111"></div>
<div class="t ns" style="left:-11.5px;width:400px;text-align:center;top:241.0px;font-size:16.5px;font-weight:400;color:#111">1</div>
<div class="t ns" style="left:88.7px;width:400px;text-align:center;top:241.0px;font-size:16.5px;font-weight:400;color:#111">0</div>
<div class="t ns" style="left:213.8px;width:400px;text-align:center;top:241.0px;font-size:16.5px;font-weight:400;color:#111">0</div>
<div class="t ns" style="left:338.7px;width:400px;text-align:center;top:241.0px;font-size:16.5px;font-weight:400;color:#111">0</div>
<div class="t ns" style="left:463.3px;width:400px;text-align:center;top:241.0px;font-size:16.5px;font-weight:400;color:#111">0</div>
<div class="t" style="left:-123.8px;width:400px;text-align:center;top:267.0px;font-size:16.5px;font-weight:700;color:#111"></div>
<div class="t ns" style="left:-11.5px;width:400px;text-align:center;top:267.0px;font-size:16.5px;font-weight:400;color:#111">2</div>
<div class="t ns" style="left:88.7px;width:400px;text-align:center;top:267.0px;font-size:16.5px;font-weight:400;color:#111">0</div>
<div class="t ns" style="left:213.8px;width:400px;text-align:center;top:267.0px;font-size:16.5px;font-weight:400;color:#111">0</div>
<div class="t ns" style="left:338.7px;width:400px;text-align:center;top:267.0px;font-size:16.5px;font-weight:400;color:#111">0</div>
<div class="t ns" style="left:463.3px;width:400px;text-align:center;top:267.0px;font-size:16.5px;font-weight:400;color:#111">0</div>
<div class="t" style="left:-123.8px;width:400px;text-align:center;top:293.0px;font-size:16.5px;font-weight:700;color:#111"></div>
<div class="t ns" style="left:-11.5px;width:400px;text-align:center;top:293.0px;font-size:16.5px;font-weight:400;color:#111">3</div>
<div class="t ns" style="left:88.7px;width:400px;text-align:center;top:293.0px;font-size:16.5px;font-weight:400;color:#111">0</div>
<div class="t ns" style="left:213.8px;width:400px;text-align:center;top:293.0px;font-size:16.5px;font-weight:400;color:#111">0</div>
<div class="t ns" style="left:338.7px;width:400px;text-align:center;top:293.0px;font-size:16.5px;font-weight:400;color:#111">0</div>
<div class="t ns" style="left:463.3px;width:400px;text-align:center;top:293.0px;font-size:16.5px;font-weight:400;color:#111">0</div>
<div class="t" style="left:-123.8px;width:400px;text-align:center;top:319.0px;font-size:16.5px;font-weight:700;color:#111">Short_Symbols</div>
<div class="t ns" style="left:-11.5px;width:400px;text-align:center;top:319.0px;font-size:16.5px;font-weight:400;color:#111"></div>
<div class="t ns" style="left:88.7px;width:400px;text-align:center;top:319.0px;font-size:16.5px;font-weight:400;color:#111">1,40,05,949</div>
<div class="t ns" style="left:213.8px;width:400px;text-align:center;top:319.0px;font-size:16.5px;font-weight:400;color:#111">12</div>
<div class="t ns" style="left:338.7px;width:400px;text-align:center;top:319.0px;font-size:16.5px;font-weight:400;color:#111">2,40,60,478</div>
<div class="t ns" style="left:463.3px;width:400px;text-align:center;top:319.0px;font-size:16.5px;font-weight:400;color:#111">12</div>
<div class="t" style="left:-123.8px;width:400px;text-align:center;top:345.0px;font-size:16.5px;font-weight:700;color:#111">Long_Symbols</div>
<div class="t ns" style="left:-11.5px;width:400px;text-align:center;top:345.0px;font-size:16.5px;font-weight:400;color:#111"></div>
<div class="t ns" style="left:88.7px;width:400px;text-align:center;top:345.0px;font-size:16.5px;font-weight:400;color:#111">0</div>
<div class="t ns" style="left:213.8px;width:400px;text-align:center;top:345.0px;font-size:16.5px;font-weight:400;color:#111">0</div>
<div class="t ns" style="left:338.7px;width:400px;text-align:center;top:345.0px;font-size:16.5px;font-weight:400;color:#111">0</div>
<div class="t ns" style="left:463.3px;width:400px;text-align:center;top:345.0px;font-size:16.5px;font-weight:400;color:#111">0</div>
<div class="t" style="left:-123.8px;width:400px;text-align:center;top:371.0px;font-size:16.5px;font-weight:700;color:#111">Type_0</div>
<div class="t ns" style="left:-11.5px;width:400px;text-align:center;top:371.0px;font-size:16.5px;font-weight:400;color:#111"></div>
<div class="t ns" style="left:88.7px;width:400px;text-align:center;top:371.0px;font-size:16.5px;font-weight:400;color:#111">0</div>
<div class="t ns" style="left:213.8px;width:400px;text-align:center;top:371.0px;font-size:16.5px;font-weight:400;color:#111">0</div>
<div class="t ns" style="left:338.7px;width:400px;text-align:center;top:371.0px;font-size:16.5px;font-weight:400;color:#111">0</div>
<div class="t ns" style="left:463.3px;width:400px;text-align:center;top:371.0px;font-size:16.5px;font-weight:400;color:#111">0</div>
<div class="t" style="left:-123.8px;width:400px;text-align:center;top:397.0px;font-size:16.5px;font-weight:700;color:#111">Type_1</div>
<div class="t ns" style="left:-11.5px;width:400px;text-align:center;top:397.0px;font-size:16.5px;font-weight:400;color:#111"></div>
<div class="t ns" style="left:88.7px;width:400px;text-align:center;top:397.0px;font-size:16.5px;font-weight:400;color:#111">0</div>
<div class="t ns" style="left:213.8px;width:400px;text-align:center;top:397.0px;font-size:16.5px;font-weight:400;color:#111">0</div>
<div class="t ns" style="left:338.7px;width:400px;text-align:center;top:397.0px;font-size:16.5px;font-weight:400;color:#111">0</div>
<div class="t ns" style="left:463.3px;width:400px;text-align:center;top:397.0px;font-size:16.5px;font-weight:400;color:#111">0</div>
<div class="t" style="left:-123.8px;width:400px;text-align:center;top:423.0px;font-size:16.5px;font-weight:700;color:#111">Type_2</div>
<div class="t ns" style="left:-11.5px;width:400px;text-align:center;top:423.0px;font-size:16.5px;font-weight:400;color:#111"></div>
<div class="t ns" style="left:88.7px;width:400px;text-align:center;top:423.0px;font-size:16.5px;font-weight:400;color:#111">0</div>
<div class="t ns" style="left:213.8px;width:400px;text-align:center;top:423.0px;font-size:16.5px;font-weight:400;color:#111">2</div>
<div class="t ns" style="left:338.7px;width:400px;text-align:center;top:423.0px;font-size:16.5px;font-weight:400;color:#111">0</div>
<div class="t ns" style="left:463.3px;width:400px;text-align:center;top:423.0px;font-size:16.5px;font-weight:400;color:#111">0</div>
<div class="t" style="left:-123.8px;width:400px;text-align:center;top:449.0px;font-size:16.5px;font-weight:700;color:#111">Type_3</div>
<div class="t ns" style="left:-11.5px;width:400px;text-align:center;top:449.0px;font-size:16.5px;font-weight:400;color:#111"></div>
<div class="t ns" style="left:88.7px;width:400px;text-align:center;top:449.0px;font-size:16.5px;font-weight:400;color:#111">0</div>
<div class="t ns" style="left:213.8px;width:400px;text-align:center;top:449.0px;font-size:16.5px;font-weight:400;color:#111">0</div>
<div class="t ns" style="left:338.7px;width:400px;text-align:center;top:449.0px;font-size:16.5px;font-weight:400;color:#111">0</div>
<div class="t ns" style="left:463.3px;width:400px;text-align:center;top:449.0px;font-size:16.5px;font-weight:400;color:#111">0</div>
<div class="t" style="left:-123.8px;width:400px;text-align:center;top:475.0px;font-size:16.5px;font-weight:700;color:#111">Type_4</div>
<div class="t ns" style="left:-11.5px;width:400px;text-align:center;top:475.0px;font-size:16.5px;font-weight:400;color:#111"></div>
<div class="t ns" style="left:88.7px;width:400px;text-align:center;top:475.0px;font-size:16.5px;font-weight:400;color:#111">0</div>
<div class="t ns" style="left:213.8px;width:400px;text-align:center;top:475.0px;font-size:16.5px;font-weight:400;color:#111">0</div>
<div class="t ns" style="left:338.7px;width:400px;text-align:center;top:475.0px;font-size:16.5px;font-weight:400;color:#111">0</div>
<div class="t ns" style="left:463.3px;width:400px;text-align:center;top:475.0px;font-size:16.5px;font-weight:400;color:#111">0</div>
<div class="t" style="left:-123.8px;width:400px;text-align:center;top:501.0px;font-size:16.5px;font-weight:700;color:#111">Type_5</div>
<div class="t ns" style="left:-11.5px;width:400px;text-align:center;top:501.0px;font-size:16.5px;font-weight:400;color:#111"></div>
<div class="t ns" style="left:88.7px;width:400px;text-align:center;top:501.0px;font-size:16.5px;font-weight:400;color:#111">0</div>
<div class="t ns" style="left:213.8px;width:400px;text-align:center;top:501.0px;font-size:16.5px;font-weight:400;color:#111">2</div>
<div class="t ns" style="left:338.7px;width:400px;text-align:center;top:501.0px;font-size:16.5px;font-weight:400;color:#111">0</div>
<div class="t ns" style="left:463.3px;width:400px;text-align:center;top:501.0px;font-size:16.5px;font-weight:400;color:#111">0</div>
<div class="t" style="left:-123.8px;width:400px;text-align:center;top:527.0px;font-size:16.5px;font-weight:700;color:#111">Type_6</div>
<div class="t ns" style="left:-11.5px;width:400px;text-align:center;top:527.0px;font-size:16.5px;font-weight:400;color:#111"></div>
<div class="t ns" style="left:88.7px;width:400px;text-align:center;top:527.0px;font-size:16.5px;font-weight:400;color:#111">0</div>
<div class="t ns" style="left:213.8px;width:400px;text-align:center;top:527.0px;font-size:16.5px;font-weight:400;color:#111">0</div>
<div class="t ns" style="left:338.7px;width:400px;text-align:center;top:527.0px;font-size:16.5px;font-weight:400;color:#111">0</div>
<div class="t ns" style="left:463.3px;width:400px;text-align:center;top:527.0px;font-size:16.5px;font-weight:400;color:#111">0</div>
<div class="t" style="left:-123.8px;width:400px;text-align:center;top:553.0px;font-size:16.5px;font-weight:700;color:#111">Type_7</div>
<div class="t ns" style="left:-11.5px;width:400px;text-align:center;top:553.0px;font-size:16.5px;font-weight:400;color:#111"></div>
<div class="t ns" style="left:88.7px;width:400px;text-align:center;top:553.0px;font-size:16.5px;font-weight:400;color:#111">0</div>
<div class="t ns" style="left:213.8px;width:400px;text-align:center;top:553.0px;font-size:16.5px;font-weight:400;color:#111">0</div>
<div class="t ns" style="left:338.7px;width:400px;text-align:center;top:553.0px;font-size:16.5px;font-weight:400;color:#111">0</div>
<div class="t ns" style="left:463.3px;width:400px;text-align:center;top:553.0px;font-size:16.5px;font-weight:400;color:#111">0</div>
<div class="t" style="left:-123.8px;width:400px;text-align:center;top:579.0px;font-size:16.5px;font-weight:700;color:#111">Type_8</div>
<div class="t ns" style="left:-11.5px;width:400px;text-align:center;top:579.0px;font-size:16.5px;font-weight:400;color:#111"></div>
<div class="t ns" style="left:88.7px;width:400px;text-align:center;top:579.0px;font-size:16.5px;font-weight:400;color:#111">0</div>
<div class="t ns" style="left:213.8px;width:400px;text-align:center;top:579.0px;font-size:16.5px;font-weight:400;color:#111">2</div>
<div class="t ns" style="left:338.7px;width:400px;text-align:center;top:579.0px;font-size:16.5px;font-weight:400;color:#111">0</div>
<div class="t ns" style="left:463.3px;width:400px;text-align:center;top:579.0px;font-size:16.5px;font-weight:400;color:#111">2</div>
<div class="t" style="left:-123.8px;width:400px;text-align:center;top:605.0px;font-size:16.5px;font-weight:700;color:#111">Type_9</div>
<div class="t ns" style="left:-11.5px;width:400px;text-align:center;top:605.0px;font-size:16.5px;font-weight:400;color:#111"></div>
<div class="t ns" style="left:88.7px;width:400px;text-align:center;top:605.0px;font-size:16.5px;font-weight:400;color:#111">0</div>
<div class="t ns" style="left:213.8px;width:400px;text-align:center;top:605.0px;font-size:16.5px;font-weight:400;color:#111">0</div>
<div class="t ns" style="left:338.7px;width:400px;text-align:center;top:605.0px;font-size:16.5px;font-weight:400;color:#111">0</div>
<div class="t ns" style="left:463.3px;width:400px;text-align:center;top:605.0px;font-size:16.5px;font-weight:400;color:#111">0</div>
<div class="t" style="left:-123.8px;width:400px;text-align:center;top:631.0px;font-size:16.5px;font-weight:700;color:#111">Type_10</div>
<div class="t ns" style="left:-11.5px;width:400px;text-align:center;top:631.0px;font-size:16.5px;font-weight:400;color:#111"></div>
<div class="t ns" style="left:88.7px;width:400px;text-align:center;top:631.0px;font-size:16.5px;font-weight:400;color:#111">0</div>
<div class="t ns" style="left:213.8px;width:400px;text-align:center;top:631.0px;font-size:16.5px;font-weight:400;color:#111">0</div>
<div class="t ns" style="left:338.7px;width:400px;text-align:center;top:631.0px;font-size:16.5px;font-weight:400;color:#111">0</div>
<div class="t ns" style="left:463.3px;width:400px;text-align:center;top:631.0px;font-size:16.5px;font-weight:400;color:#111">0</div>
<div class="t" style="left:-123.8px;width:400px;text-align:center;top:657.0px;font-size:16.5px;font-weight:700;color:#111">Type_11</div>
<div class="t ns" style="left:-11.5px;width:400px;text-align:center;top:657.0px;font-size:16.5px;font-weight:400;color:#111"></div>
<div class="t ns" style="left:88.7px;width:400px;text-align:center;top:657.0px;font-size:16.5px;font-weight:400;color:#111">0</div>
<div class="t ns" style="left:213.8px;width:400px;text-align:center;top:657.0px;font-size:16.5px;font-weight:400;color:#111">0</div>
<div class="t ns" style="left:338.7px;width:400px;text-align:center;top:657.0px;font-size:16.5px;font-weight:400;color:#111">0</div>
<div class="t ns" style="left:463.3px;width:400px;text-align:center;top:657.0px;font-size:16.5px;font-weight:400;color:#111">0</div>
<div class="t" style="left:-123.8px;width:400px;text-align:center;top:683.0px;font-size:16.5px;font-weight:700;color:#111">Type_12</div>
<div class="t ns" style="left:-11.5px;width:400px;text-align:center;top:683.0px;font-size:16.5px;font-weight:400;color:#111"></div>
<div class="t ns" style="left:88.7px;width:400px;text-align:center;top:683.0px;font-size:16.5px;font-weight:400;color:#111">0</div>
<div class="t ns" style="left:213.8px;width:400px;text-align:center;top:683.0px;font-size:16.5px;font-weight:400;color:#111">0</div>
<div class="t ns" style="left:338.7px;width:400px;text-align:center;top:683.0px;font-size:16.5px;font-weight:400;color:#111">0</div>
<div class="t ns" style="left:463.3px;width:400px;text-align:center;top:683.0px;font-size:16.5px;font-weight:400;color:#111">0</div>
<div class="t" style="left:-123.8px;width:400px;text-align:center;top:709.0px;font-size:16.5px;font-weight:700;color:#111">Type_13</div>
<div class="t ns" style="left:-11.5px;width:400px;text-align:center;top:709.0px;font-size:16.5px;font-weight:400;color:#111"></div>
<div class="t ns" style="left:88.7px;width:400px;text-align:center;top:709.0px;font-size:16.5px;font-weight:400;color:#111">0</div>
<div class="t ns" style="left:213.8px;width:400px;text-align:center;top:709.0px;font-size:16.5px;font-weight:400;color:#111">0</div>
<div class="t ns" style="left:338.7px;width:400px;text-align:center;top:709.0px;font-size:16.5px;font-weight:400;color:#111">0</div>
<div class="t ns" style="left:463.3px;width:400px;text-align:center;top:709.0px;font-size:16.5px;font-weight:400;color:#111">4</div>
<div class="t" style="left:-123.8px;width:400px;text-align:center;top:735.0px;font-size:16.5px;font-weight:700;color:#111">Type_14</div>
<div class="t ns" style="left:-11.5px;width:400px;text-align:center;top:735.0px;font-size:16.5px;font-weight:400;color:#111"></div>
<div class="t ns" style="left:88.7px;width:400px;text-align:center;top:735.0px;font-size:16.5px;font-weight:400;color:#111">0</div>
<div class="t ns" style="left:213.8px;width:400px;text-align:center;top:735.0px;font-size:16.5px;font-weight:400;color:#111">0</div>
<div class="t ns" style="left:338.7px;width:400px;text-align:center;top:735.0px;font-size:16.5px;font-weight:400;color:#111">0</div>
<div class="t ns" style="left:463.3px;width:400px;text-align:center;top:735.0px;font-size:16.5px;font-weight:400;color:#111">0</div>
<div class="b" style="left:1.5px;top:1.3px;width:837.5px;height:2.0px;background:#7d7d7d"></div>
<div class="b" style="left:1.5px;top:27.3px;width:837.5px;height:2.0px;background:#7d7d7d"></div>
<div class="b" style="left:1.5px;top:53.3px;width:837.5px;height:2.0px;background:#7d7d7d"></div>
<div class="b" style="left:1.5px;top:79.3px;width:837.5px;height:2.0px;background:#7d7d7d"></div>
<div class="b" style="left:1.5px;top:105.3px;width:837.5px;height:2.0px;background:#7d7d7d"></div>
<div class="b" style="left:1.5px;top:131.3px;width:837.5px;height:2.0px;background:#7d7d7d"></div>
<div class="b" style="left:1.5px;top:157.3px;width:837.5px;height:2.0px;background:#7d7d7d"></div>
<div class="b" style="left:1.5px;top:183.3px;width:837.5px;height:2.0px;background:#7d7d7d"></div>
<div class="b" style="left:1.5px;top:209.3px;width:837.5px;height:2.0px;background:#7d7d7d"></div>
<div class="b" style="left:1.5px;top:235.3px;width:837.5px;height:2.0px;background:#7d7d7d"></div>
<div class="b" style="left:1.5px;top:261.3px;width:837.5px;height:2.0px;background:#7d7d7d"></div>
<div class="b" style="left:1.5px;top:287.3px;width:837.5px;height:2.0px;background:#7d7d7d"></div>
<div class="b" style="left:1.5px;top:313.3px;width:837.5px;height:2.0px;background:#7d7d7d"></div>
<div class="b" style="left:1.5px;top:339.3px;width:837.5px;height:2.0px;background:#7d7d7d"></div>
<div class="b" style="left:1.5px;top:365.3px;width:837.5px;height:2.0px;background:#7d7d7d"></div>
<div class="b" style="left:1.5px;top:391.3px;width:837.5px;height:2.0px;background:#7d7d7d"></div>
<div class="b" style="left:1.5px;top:417.3px;width:837.5px;height:2.0px;background:#7d7d7d"></div>
<div class="b" style="left:1.5px;top:443.3px;width:837.5px;height:2.0px;background:#7d7d7d"></div>
<div class="b" style="left:1.5px;top:469.3px;width:837.5px;height:2.0px;background:#7d7d7d"></div>
<div class="b" style="left:1.5px;top:495.3px;width:837.5px;height:2.0px;background:#7d7d7d"></div>
<div class="b" style="left:1.5px;top:521.3px;width:837.5px;height:2.0px;background:#7d7d7d"></div>
<div class="b" style="left:1.5px;top:547.3px;width:837.5px;height:2.0px;background:#7d7d7d"></div>
<div class="b" style="left:1.5px;top:573.3px;width:837.5px;height:2.0px;background:#7d7d7d"></div>
<div class="b" style="left:1.5px;top:599.3px;width:837.5px;height:2.0px;background:#7d7d7d"></div>
<div class="b" style="left:1.5px;top:625.3px;width:837.5px;height:2.0px;background:#7d7d7d"></div>
<div class="b" style="left:1.5px;top:651.3px;width:837.5px;height:2.0px;background:#7d7d7d"></div>
<div class="b" style="left:1.5px;top:677.3px;width:837.5px;height:2.0px;background:#7d7d7d"></div>
<div class="b" style="left:1.5px;top:703.3px;width:837.5px;height:2.0px;background:#7d7d7d"></div>
<div class="b" style="left:1.5px;top:729.3px;width:837.5px;height:2.0px;background:#7d7d7d"></div>
<div class="b" style="left:1.5px;top:755.3px;width:837.5px;height:2.0px;background:#7d7d7d"></div>
<div class="b" style="left:0.5px;top:1.3px;width:2.0px;height:753.7px;background:#7d7d7d"></div>
<div class="b" style="left:150.0px;top:1.3px;width:2.0px;height:753.7px;background:#7d7d7d"></div>
<div class="b" style="left:225.0px;top:1.3px;width:2.0px;height:753.7px;background:#7d7d7d"></div>
<div class="b" style="left:350.3px;top:1.3px;width:2.0px;height:753.7px;background:#7d7d7d"></div>
<div class="b" style="left:475.4px;top:1.3px;width:2.0px;height:753.7px;background:#7d7d7d"></div>
<div class="b" style="left:600.0px;top:1.3px;width:2.0px;height:753.7px;background:#7d7d7d"></div>
<div class="b" style="left:724.7px;top:1.3px;width:2.0px;height:753.7px;background:#7d7d7d"></div>
</div>
<div style="position:absolute;left:1803px;top:191px;width:108px;height:755px;overflow:hidden">
<div class="t ns" style="left:2.5px;top:7.0px;font-size:16.5px;color:#111">27,50,06,07,146</div>
<div class="t ns" style="left:2.5px;top:33.0px;font-size:16.5px;color:#111">27,50,06,07,066</div>
<div class="t ns" style="left:2.5px;top:59.0px;font-size:16.5px;color:#111">27,50,06,07,366</div>
<div class="t ns" style="left:2.5px;top:85.0px;font-size:16.5px;color:#111">27,50,06,07,234</div>
<div class="t ns" style="left:-138.5px;width:400px;text-align:center;top:111.0px;font-size:16.5px;color:#111">0</div>
<div class="t ns" style="left:-138.5px;width:400px;text-align:center;top:137.0px;font-size:16.5px;color:#111">0</div>
<div class="t ns" style="left:-138.5px;width:400px;text-align:center;top:163.0px;font-size:16.5px;color:#111">0</div>
<div class="t ns" style="left:-138.5px;width:400px;text-align:center;top:189.0px;font-size:16.5px;color:#111">0</div>
<div class="t ns" style="left:-138.5px;width:400px;text-align:center;top:215.0px;font-size:16.5px;color:#111">0</div>
<div class="t ns" style="left:-138.5px;width:400px;text-align:center;top:241.0px;font-size:16.5px;color:#111">0</div>
<div class="t ns" style="left:-138.5px;width:400px;text-align:center;top:267.0px;font-size:16.5px;color:#111">0</div>
<div class="t ns" style="left:-138.5px;width:400px;text-align:center;top:293.0px;font-size:16.5px;color:#111">0</div>
<div class="t ns" style="left:-138.5px;width:400px;text-align:center;top:319.0px;font-size:16.5px;color:#111">3,80,66,451</div>
<div class="t ns" style="left:-138.5px;width:400px;text-align:center;top:345.0px;font-size:16.5px;color:#111">0</div>
<div class="t ns" style="left:-138.5px;width:400px;text-align:center;top:371.0px;font-size:16.5px;color:#111">0</div>
<div class="t ns" style="left:-138.5px;width:400px;text-align:center;top:397.0px;font-size:16.5px;color:#111">0</div>
<div class="t ns" style="left:-138.5px;width:400px;text-align:center;top:423.0px;font-size:16.5px;color:#111">2</div>
<div class="t ns" style="left:-138.5px;width:400px;text-align:center;top:449.0px;font-size:16.5px;color:#111">0</div>
<div class="t ns" style="left:-138.5px;width:400px;text-align:center;top:475.0px;font-size:16.5px;color:#111">0</div>
<div class="t ns" style="left:-138.5px;width:400px;text-align:center;top:501.0px;font-size:16.5px;color:#111">2</div>
<div class="t ns" style="left:-138.5px;width:400px;text-align:center;top:527.0px;font-size:16.5px;color:#111">0</div>
<div class="t ns" style="left:-138.5px;width:400px;text-align:center;top:553.0px;font-size:16.5px;color:#111">0</div>
<div class="t ns" style="left:-138.5px;width:400px;text-align:center;top:579.0px;font-size:16.5px;color:#111">4</div>
<div class="t ns" style="left:-138.5px;width:400px;text-align:center;top:605.0px;font-size:16.5px;color:#111">0</div>
<div class="t ns" style="left:-138.5px;width:400px;text-align:center;top:631.0px;font-size:16.5px;color:#111">0</div>
<div class="t ns" style="left:-138.5px;width:400px;text-align:center;top:657.0px;font-size:16.5px;color:#111">0</div>
<div class="t ns" style="left:-138.5px;width:400px;text-align:center;top:683.0px;font-size:16.5px;color:#111">0</div>
<div class="t ns" style="left:-138.5px;width:400px;text-align:center;top:709.0px;font-size:16.5px;color:#111">4</div>
<div class="t ns" style="left:-138.5px;width:400px;text-align:center;top:735.0px;font-size:16.5px;color:#111">0</div>
</div>
<div class="b" style="left:1077.5px;top:945.0px;width:837.5px;height:1.5px;background:#8a8a8a"></div>
<div class="b" style="left:1910.0px;top:137.0px;width:2.5px;height:745.0px;background:#6e6e6e"></div>
<div class="b" style="left:1090.0px;top:942.0px;width:775.0px;height:2.5px;background:#6e6e6e"></div>
<div class="b" style="left:0.0px;top:988.0px;width:1918.0px;height:30.0px;background:#3f6084"></div>
<div class="t" style="left:13.0px;top:996.6px;font-size:17px;color:#fff;font-weight:700;font-family:'Liberation Sans', sans-serif;">0.0.8.0</div>
<div class="t" style="left:1085.2px;top:997.1px;font-size:16.6px;color:#fff;font-weight:700;font-family:'Liberation Sans', sans-serif;">Decoding Data...</div>
<div class="t" style="left:1527.2px;top:996.6px;font-size:16.4px;color:#fff;font-weight:700;font-family:'Liberation Sans', sans-serif;">Trigger Found!</div>
<div class="b" style="left:1657.0px;top:994.0px;width:249.5px;height:18.7px;background:#0078d4;border-radius:3px"></div>
<div class="t" style="left:1581.0px;width:400px;text-align:center;top:996.8px;font-size:16.2px;font-weight:400;color:#1b3550">100%</div>
</body></html>
